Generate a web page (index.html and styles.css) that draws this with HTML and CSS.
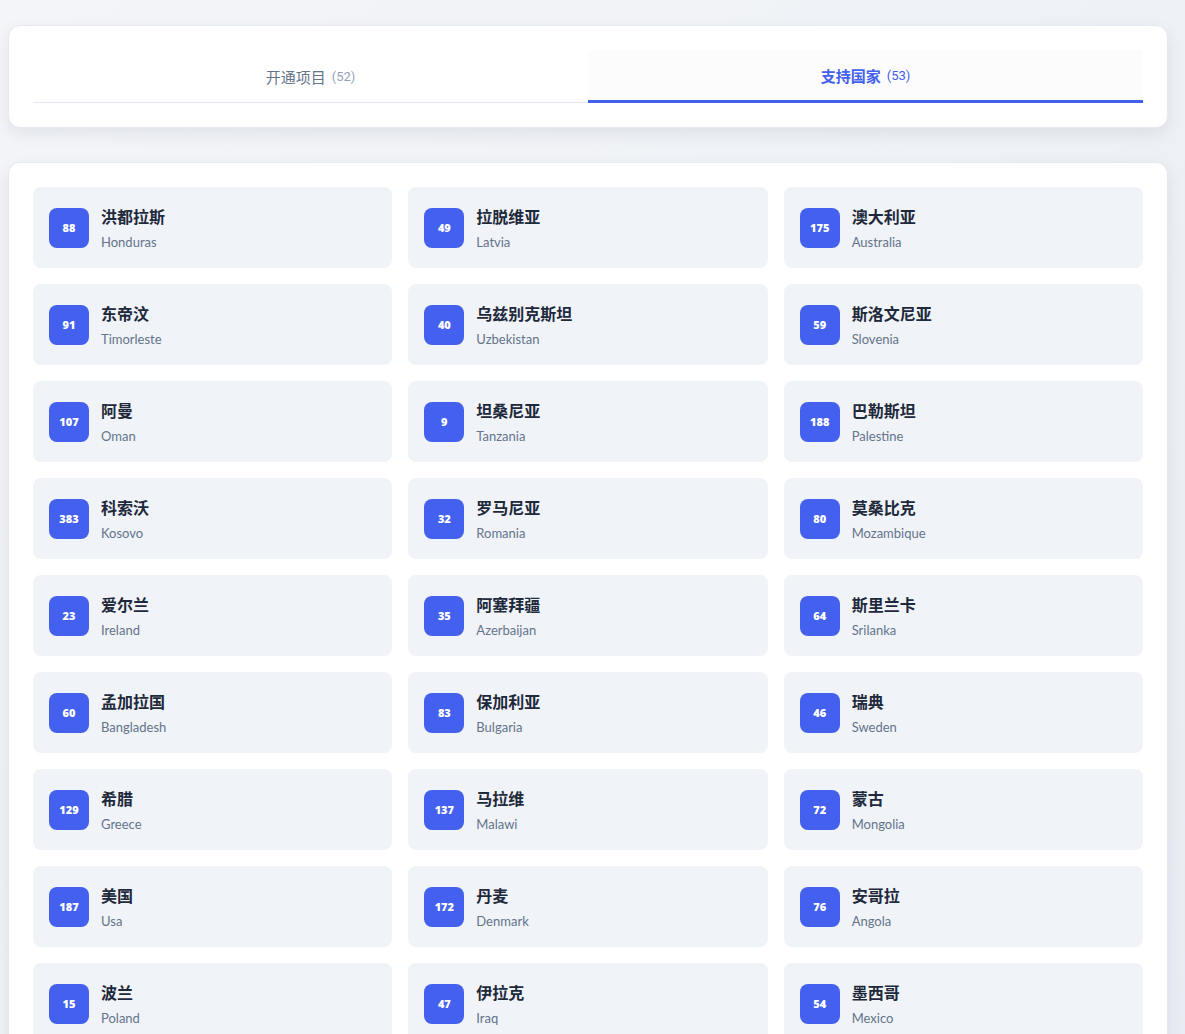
FILE: index.html
```html
<!DOCTYPE html>
<html lang="zh-CN">
<head>
    <meta charset="UTF-8">
    <meta name="viewport" content="width=device-width, initial-scale=1.0">
    <title>支持国家</title>
    <link rel="stylesheet" href="styles.css">
</head>
<body>
    <div class="page">
        <div class="card tabs-card">
            <div class="tabs">
                <div class="tab">开通项目<span class="count">(52)</span></div>
                <div class="tab active">支持国家<span class="count">(53)</span></div>
            </div>
        </div>

        <div class="card list-card">
            <div class="country-grid">
                <div class="country"><div class="badge">88</div><div class="info"><div class="cn">洪都拉斯</div><div class="en">Honduras</div></div></div>
                <div class="country"><div class="badge">49</div><div class="info"><div class="cn">拉脱维亚</div><div class="en">Latvia</div></div></div>
                <div class="country"><div class="badge">175</div><div class="info"><div class="cn">澳大利亚</div><div class="en">Australia</div></div></div>

                <div class="country"><div class="badge">91</div><div class="info"><div class="cn">东帝汶</div><div class="en">Timorleste</div></div></div>
                <div class="country"><div class="badge">40</div><div class="info"><div class="cn">乌兹别克斯坦</div><div class="en">Uzbekistan</div></div></div>
                <div class="country"><div class="badge">59</div><div class="info"><div class="cn">斯洛文尼亚</div><div class="en">Slovenia</div></div></div>

                <div class="country"><div class="badge">107</div><div class="info"><div class="cn">阿曼</div><div class="en">Oman</div></div></div>
                <div class="country"><div class="badge">9</div><div class="info"><div class="cn">坦桑尼亚</div><div class="en">Tanzania</div></div></div>
                <div class="country"><div class="badge">188</div><div class="info"><div class="cn">巴勒斯坦</div><div class="en">Palestine</div></div></div>

                <div class="country"><div class="badge">383</div><div class="info"><div class="cn">科索沃</div><div class="en">Kosovo</div></div></div>
                <div class="country"><div class="badge">32</div><div class="info"><div class="cn">罗马尼亚</div><div class="en">Romania</div></div></div>
                <div class="country"><div class="badge">80</div><div class="info"><div class="cn">莫桑比克</div><div class="en">Mozambique</div></div></div>

                <div class="country"><div class="badge">23</div><div class="info"><div class="cn">爱尔兰</div><div class="en">Ireland</div></div></div>
                <div class="country"><div class="badge">35</div><div class="info"><div class="cn">阿塞拜疆</div><div class="en">Azerbaijan</div></div></div>
                <div class="country"><div class="badge">64</div><div class="info"><div class="cn">斯里兰卡</div><div class="en">Srilanka</div></div></div>

                <div class="country"><div class="badge">60</div><div class="info"><div class="cn">孟加拉国</div><div class="en">Bangladesh</div></div></div>
                <div class="country"><div class="badge">83</div><div class="info"><div class="cn">保加利亚</div><div class="en">Bulgaria</div></div></div>
                <div class="country"><div class="badge">46</div><div class="info"><div class="cn">瑞典</div><div class="en">Sweden</div></div></div>

                <div class="country"><div class="badge">129</div><div class="info"><div class="cn">希腊</div><div class="en">Greece</div></div></div>
                <div class="country"><div class="badge">137</div><div class="info"><div class="cn">马拉维</div><div class="en">Malawi</div></div></div>
                <div class="country"><div class="badge">72</div><div class="info"><div class="cn">蒙古</div><div class="en">Mongolia</div></div></div>

                <div class="country"><div class="badge">187</div><div class="info"><div class="cn">美国</div><div class="en">Usa</div></div></div>
                <div class="country"><div class="badge">172</div><div class="info"><div class="cn">丹麦</div><div class="en">Denmark</div></div></div>
                <div class="country"><div class="badge">76</div><div class="info"><div class="cn">安哥拉</div><div class="en">Angola</div></div></div>

                <div class="country"><div class="badge">15</div><div class="info"><div class="cn">波兰</div><div class="en">Poland</div></div></div>
                <div class="country"><div class="badge">47</div><div class="info"><div class="cn">伊拉克</div><div class="en">Iraq</div></div></div>
                <div class="country"><div class="badge">54</div><div class="info"><div class="cn">墨西哥</div><div class="en">Mexico</div></div></div>
            </div>
        </div>
    </div>
</body>
</html>
```

FILE: styles.css
```css
body {
    margin: 0;
    background: linear-gradient(135deg, #f3f5f8 0%, #e9edf3 100%);
    font-family: Lato, "Noto Sans", "Noto Sans CJK SC", sans-serif;
    min-height: 100vh;
}

.page {
    padding: 25px 17px 0 8px; /* page gutter */
}

.card {
    background-color: #ffffff;
    border: 1px solid #e5e9f0;
    border-radius: 12px;
    box-shadow: 0 6px 16px rgba(30, 41, 59, 0.08);
    padding: 24px 24px;
}

.tabs-card {
    margin-bottom: 34px;
}

.tabs {
    display: flex;
    border-bottom: 1px solid #e2e8f0;
}

.tab {
    flex: 1;
    height: 52px;
    display: flex;
    align-items: center;
    justify-content: center;
    font-family: "Noto Sans CJK SC", sans-serif;
    font-size: 15px;
    color: #64748b;
    cursor: pointer;
}

.tab .count {
    font-family: Roboto, "Liberation Sans", sans-serif;
    font-size: 13px;
    color: #94a3b8;
    margin-left: 6px;
    font-weight: 400;
}

.tab.active {
    background-color: #fcfcfd;
    color: #4361ee;
    font-weight: 700;
    border-bottom: 3px solid #4361ee;
    margin-bottom: -1px;
    height: 50px;
}

.tab.active .count {
    color: #4361ee;
}

.list-card {
    padding-bottom: 0;
    border-bottom: none;
    border-radius: 12px 12px 0 0;
}

.country-grid {
    display: grid;
    grid-template-columns: repeat(3, 1fr);
    gap: 16px;
}

.country {
    display: flex;
    align-items: center;
    gap: 12px;
    background-color: #f0f3f8;
    border-radius: 8px;
    height: 81px;
    padding: 0 16px;
    box-sizing: border-box;
}

.badge {
    width: 40px;
    height: 40px;
    flex-shrink: 0;
    border-radius: 8px;
    background-color: #4361ee;
    color: #ffffff;
    font-family: "Open Sans", sans-serif;
    font-weight: 800;
    font-size: 11px;
    display: flex;
    align-items: center;
    justify-content: center;
}

.cn {
    font-family: "Noto Sans CJK SC", sans-serif;
    font-weight: 700;
    font-size: 16px;
    color: #1e293b;
    line-height: 22px;
}

.en {
    font-size: 13px;
    color: #64748b;
    margin-top: 7px;
    line-height: 16px;
}
```
